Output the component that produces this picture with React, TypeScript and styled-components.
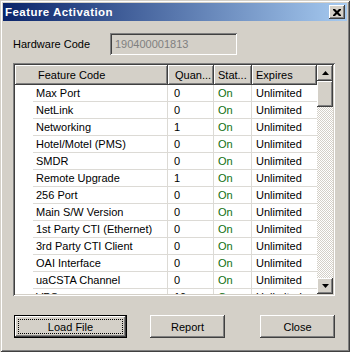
import React from "react";
import styled, { createGlobalStyle, css } from "styled-components";

const GlobalStyle = createGlobalStyle`
  html, body {
    margin: 0;
    padding: 0;
    background: #d4d0c8;
  }
  body {
    font-family: "Liberation Sans", Arial, sans-serif;
    font-size: 11px;
    color: #000;
  }
`;

type Feature = {
  name: string;
  qty: string;
  status: string;
  expires: string;
};

const features: Feature[] = [
  { name: "Max Port", qty: "0", status: "On", expires: "Unlimited" },
  { name: "NetLink", qty: "0", status: "On", expires: "Unlimited" },
  { name: "Networking", qty: "1", status: "On", expires: "Unlimited" },
  { name: "Hotel/Motel (PMS)", qty: "0", status: "On", expires: "Unlimited" },
  { name: "SMDR", qty: "0", status: "On", expires: "Unlimited" },
  { name: "Remote Upgrade", qty: "1", status: "On", expires: "Unlimited" },
  { name: "256 Port", qty: "0", status: "On", expires: "Unlimited" },
  { name: "Main S/W Version", qty: "0", status: "On", expires: "Unlimited" },
  { name: "1st Party CTI (Ethernet)", qty: "0", status: "On", expires: "Unlimited" },
  { name: "3rd Party CTI Client", qty: "0", status: "On", expires: "Unlimited" },
  { name: "OAI Interface", qty: "0", status: "On", expires: "Unlimited" },
  { name: "uaCSTA Channel", qty: "0", status: "On", expires: "Unlimited" },
  { name: "VPS", qty: "10", status: "On", expires: "Unlimited" },
];

// classic 3d edges
const raised = css`
  background: #d4d0c8;
  box-shadow: inset -1px -1px 0 #404040, inset 1px 1px 0 #fff,
    inset -2px -2px 0 #808080, inset 2px 2px 0 #d4d0c8;
`;

const sunken = css`
  box-shadow: inset 1px 1px 0 #808080, inset -1px -1px 0 #fff,
    inset 2px 2px 0 #404040, inset -2px -2px 0 #d4d0c8;
`;

export default function App() {
  return (
    <>
      <GlobalStyle />
      <Window>
        <TitleBar>
          <Title>Feature Activation</Title>
          <CloseButton>
            <svg width="8" height="7" viewBox="0 0 8 7">
              <path
                d="M0 0h2l2 2 2-2h2v1L5.5 3.5 8 6v1H6L4 5 2 7H0V6l2.5-2.5L0 1z"
                fill="#000"
              />
            </svg>
          </CloseButton>
        </TitleBar>

        <Content>
          <FieldRow>
            <FieldLabel>Hardware Code</FieldLabel>
            <CodeInput>190400001813</CodeInput>
          </FieldRow>

          <ListBox>
            <Table>
              <HeaderRow>
                <HeaderCell $pad={23}>Feature Code</HeaderCell>
                <HeaderCell $pad={7}>Quan...</HeaderCell>
                <HeaderCell $pad={4}>Stat...</HeaderCell>
                <HeaderCell $pad={4}>Expires</HeaderCell>
              </HeaderRow>
              <Rows>
                {features.map((f) => (
                  <Row key={f.name}>
                    <Gutter />
                    <Cell $pad={3}>{f.name}</Cell>
                    <Cell $pad={6}>{f.qty}</Cell>
                    <Cell $pad={4} $green>
                      {f.status}
                    </Cell>
                    <Cell $pad={4} $last>
                      {f.expires}
                    </Cell>
                  </Row>
                ))}
              </Rows>
            </Table>
            <ScrollBar>
              <ArrowButton>
                <svg width="7" height="4" viewBox="0 0 7 4">
                  <path d="M3.5 0L7 4H0z" fill="#000" />
                </svg>
              </ArrowButton>
              <Thumb />
              <Track />
              <ArrowButton>
                <svg width="7" height="4" viewBox="0 0 7 4">
                  <path d="M0 0h7L3.5 4z" fill="#000" />
                </svg>
              </ArrowButton>
            </ScrollBar>
          </ListBox>

          <ButtonRow>
            <PushButton $w={113} $default>
              Load File
            </PushButton>
            <PushButton $w={75} $gap={23}>
              Report
            </PushButton>
            <PushButton $w={75} $gap={35}>
              Close
            </PushButton>
          </ButtonRow>
        </Content>
      </Window>
    </>
  );
}

const Window = styled.div`
  width: 350px;
  height: 352px;
  box-sizing: border-box;
  padding: 3px;
  background: #d4d0c8;
  box-shadow: inset 1px 1px 0 #d4d0c8, inset -1px -1px 0 #404040,
    inset 2px 2px 0 #fff, inset -2px -2px 0 #808080;
  display: flex;
  flex-direction: column;
`;

const TitleBar = styled.div`
  height: 18px;
  flex: none;
  padding: 0 2px;
  background: linear-gradient(to right, #0a246a, #a6caf0);
  display: flex;
  align-items: center;
  justify-content: space-between;
`;

const Title = styled.span`
  color: #fff;
  font-weight: bold;
  font-size: 11.5px;
  letter-spacing: 0.45px;
`;

const CloseButton = styled.div`
  ${raised};
  width: 16px;
  height: 14px;
  display: flex;
  align-items: center;
  justify-content: center;
  padding-right: 1px;
  box-sizing: border-box;
`;

const Content = styled.div`
  flex: 1;
  display: flex;
  flex-direction: column;
  padding: 12px 12px 0 10px;
`;

const FieldRow = styled.div`
  display: flex;
  align-items: center;
  height: 22px;
`;

const FieldLabel = styled.span`
  width: 97px;
`;

const CodeInput = styled.div`
  ${sunken};
  width: 127px;
  height: 22px;
  box-sizing: border-box;
  padding: 0 5px;
  line-height: 22px;
  color: #808080;
  background: #d4d0c8;
`;

const ListBox = styled.div`
  ${sunken};
  margin-top: 8px;
  height: 233px;
  box-sizing: border-box;
  padding: 2px;
  background: #fff;
  display: flex;
`;

const Table = styled.div`
  flex: 1;
  display: flex;
  flex-direction: column;
  overflow: hidden;
`;

const HeaderRow = styled.div`
  display: grid;
  grid-template-columns: 153px 46px 38px 65px;
  height: 20px;
  flex: none;
`;

const HeaderCell = styled.div<{ $pad: number }>`
  ${raised};
  padding-left: ${(p) => p.$pad}px;
  line-height: 20px;
  white-space: nowrap;
  overflow: hidden;
`;

const Rows = styled.div`
  flex: 1;
  overflow: hidden;
`;

const Row = styled.div`
  display: grid;
  grid-template-columns: 18px 135px 46px 38px 65px;
  height: 17px;
`;

const Gutter = styled.div``;

const Cell = styled.div<{ $pad: number; $green?: boolean; $last?: boolean }>`
  box-sizing: border-box;
  padding-left: ${(p) => p.$pad}px;
  line-height: 16px;
  white-space: nowrap;
  overflow: hidden;
  color: ${(p) => (p.$green ? "#0f6f0f" : "#000")};
  border-bottom: 1px solid #dcdad5;
  border-right: ${(p) => (p.$last ? "none" : "1px solid #dcdad5")};
`;

const ScrollBar = styled.div`
  width: 16px;
  flex: none;
  display: flex;
  flex-direction: column;
`;

const ArrowButton = styled.div`
  ${raised};
  height: 16px;
  flex: none;
  display: flex;
  align-items: center;
  justify-content: center;
`;

const Thumb = styled.div`
  ${raised};
  height: 26px;
  flex: none;
`;

const Track = styled.div`
  flex: 1;
  background: repeating-conic-gradient(#fff 0 25%, #d4d0c8 0 50%) 0 0 / 2px 2px;
`;

const ButtonRow = styled.div`
  display: flex;
  margin-top: 19px;
  padding-left: 1px;
`;

const PushButton = styled.div<{ $w: number; $gap?: number; $default?: boolean }>`
  width: ${(p) => p.$w}px;
  height: 23px;
  margin-left: ${(p) => p.$gap ?? 0}px;
  box-sizing: border-box;
  background: #d4d0c8;
  display: flex;
  align-items: center;
  justify-content: center;
  box-shadow: ${(p) =>
    p.$default
      ? "inset 0 0 0 1px #000, inset -2px -2px 0 #404040, inset 2px 2px 0 #fff, inset -3px -3px 0 #808080"
      : "inset -1px -1px 0 #404040, inset 1px 1px 0 #fff, inset -2px -2px 0 #808080"};
  outline: ${(p) => (p.$default ? "1px dotted #000" : "none")};
  outline-offset: -5px;
`;
